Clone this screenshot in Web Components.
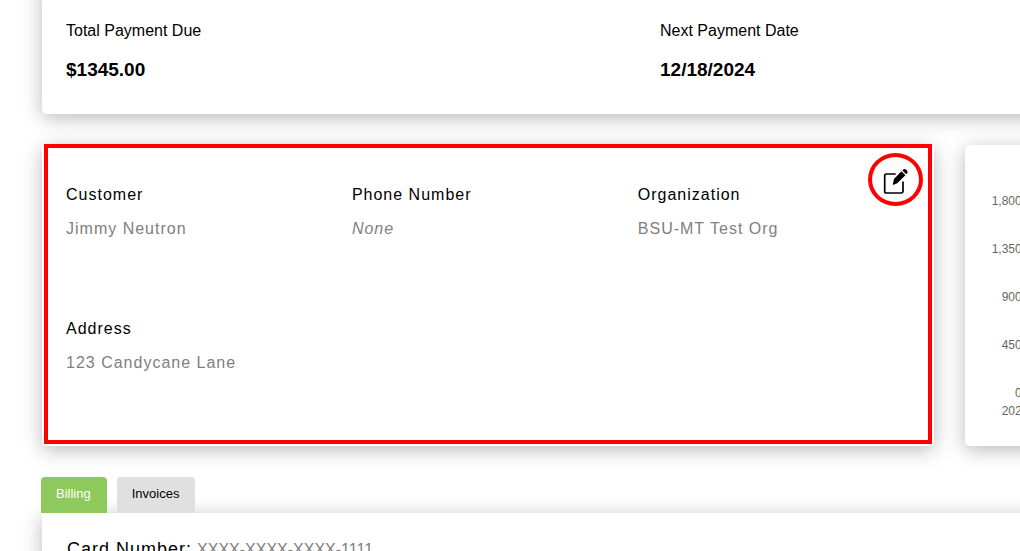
<!DOCTYPE html>
<html lang="en">
<head>
<meta charset="utf-8">
<title>Customer billing</title>
<style>
  html { overflow: hidden; height: 100%; }
  body { margin: 0; height: 100%; overflow: hidden; background: #fff; color: #000; font: 16px/20px "Liberation Sans", Arial, sans-serif; }
</style>
</head>
<body>
<billing-page></billing-page>
<script>
const define = (name, html, setup) => customElements.define(name, class extends HTMLElement {
  constructor() {
    super();
    const t = document.createElement('template');
    t.innerHTML = html;
    this.attachShadow({ mode: 'open' }).append(t.content.cloneNode(true));
    if (setup) setup(this);
  }
});

define('panel-card', `
  <style>
    :host { display: block; box-sizing: border-box; position: relative; background: #fff; border-radius: 5px;
      box-shadow: 0 4px 20px rgba(0,0,0,.28); }
  </style>
  <slot></slot>`);

define('summary-item', `
  <style>
    :host { display: block; }
    p { margin: 0; }
    .value { margin-top: 17px; font-size: 19px; line-height: 24px; font-weight: bold; }
  </style>
  <p><slot name="label"></slot></p>
  <p class="value"><slot></slot></p>`);

define('detail-field', `
  <style>
    :host { display: block; letter-spacing: 1px; }
    p { margin: 0; }
    .value { margin-top: 14px; color: #808080; }
  </style>
  <p><slot name="label"></slot></p>
  <p class="value"><slot></slot></p>`);

define('edit-button', `
  <style>
    :host { display: block; }
    button { display: grid; place-items: center; box-sizing: border-box; width: 55px; height: 53px; padding: 3px 0 0;
      border: 4px solid #f00; border-radius: 50%; background: none; color: #000; cursor: pointer; }
    svg { display: block; }
  </style>
  <button type="button" aria-label="Edit customer">
    <svg width="28" height="28" viewBox="0 0 28 28" aria-hidden="true">
      <path d="M14 7H5.500A1.800 1.800 0 0 0 3.700 8.800V24.200a1.800 1.800 0 0 0 1.800 1.800H20.200A1.800 1.800 0 0 0 22 24.200V15" fill="none" stroke="currentColor" stroke-width="1.700" stroke-linecap="round"/>
      <path d="M20.400 4.300l4 3.900L16.200 16.300l-3.600 1.500c-.6.200-1-.2-.8-.8l1.200-4.900zM21.400 3.400l.9-.8c.8-.8 2-.8 2.800 0l.9.900c.8.800.8 2 0 2.800l-.8.900z" fill="currentColor"/>
    </svg>
  </button>`);

define('customer-card', `
  <style>
    :host { display: block; }
    panel-card { height: 100%; }
    .fields { display: grid; grid-template-columns: repeat(3, 1fr); row-gap: 80px; padding: 40px 10px 73px 24px; }
    .outline { position: absolute; inset: -1px 2px 2px 2px; border: 4px solid #f00; pointer-events: none; }
    edit-button { position: absolute; top: 8px; right: 11px; }
  </style>
  <panel-card>
    <div class="fields">
      <detail-field><span slot="label">Customer</span>Jimmy Neutron</detail-field>
      <detail-field><span slot="label">Phone Number</span><em>None</em></detail-field>
      <detail-field><span slot="label">Organization</span>BSU-MT Test Org</detail-field>
      <detail-field><span slot="label">Address</span>123 Candycane Lane</detail-field>
    </div>
    <div class="outline"></div>
    <edit-button></edit-button>
  </panel-card>`);

define('payment-chart', `
  <style>
    :host { display: block; color: #666; font-size: 12px; line-height: 16px; }
    panel-card { height: 100%; padding: 48px 24px 24px; }
    ul { display: grid; row-gap: 32px; width: 33px; margin: 0; padding: 0; list-style: none; text-align: right; }
    p { margin: 2px 0 0 13px; }
  </style>
  <panel-card>
    <ul><li>1,800</li><li>1,350</li><li>900</li><li>450</li><li>0</li></ul>
    <p>2024</p>
  </panel-card>`);

define('tab-button', `
  <style>
    :host { display: block; }
    button { height: 36px; padding: 0 16px 2px 15px; border: 0; border-radius: 4px 4px 0 0; background: #e0e0e0; color: #000;
      font: 13px/16px "Liberation Sans", Arial, sans-serif; cursor: pointer; display: block; }
    :host([selected]) button { background: #8dc95c; color: #fff; }
  </style>
  <button type="button" role="tab"><slot></slot></button>`,
  el => queueMicrotask(() => el.shadowRoot.querySelector('button').setAttribute('aria-selected', el.hasAttribute('selected'))));

define('billing-tabs', `
  <style>
    :host { display: block; }
    .tabs { display: flex; gap: 10px; margin-left: -1px; position: relative; z-index: 1; }
    panel-card { min-height: 240px; padding: 24px 25px; border-top-left-radius: 0; }
    p { margin: 0; display: flex; gap: 5px; align-items: baseline; line-height: 24px; }
    .label { font-size: 18px; letter-spacing: 1px; }
    .value { color: #808080; }
  </style>
  <div class="tabs" role="tablist">
    <tab-button selected>Billing</tab-button>
    <tab-button>Invoices</tab-button>
  </div>
  <panel-card>
    <p><span class="label">Card Number:</span><span class="value">XXXX-XXXX-XXXX-1111</span></p>
  </panel-card>`);

define('billing-page', `
  <style>
    :host { display: block; box-sizing: border-box; width: 130vw; padding: 0 48px 0 42px; }
    .summary { display: grid; grid-template-columns: 1fr 1fr; margin-top: -24px; padding: 45px 24px 32px; }
    .row { display: grid; grid-template-columns: 37fr 13fr; gap: 31px; margin: 31px 0; }
  </style>
  <panel-card class="summary">
    <summary-item><span slot="label">Total Payment Due</span>$1345.00</summary-item>
    <summary-item><span slot="label">Next Payment Date</span>12/18/2024</summary-item>
  </panel-card>
  <div class="row">
    <customer-card></customer-card>
    <payment-chart></payment-chart>
  </div>
  <billing-tabs></billing-tabs>`);
</script>
</body>
</html>
